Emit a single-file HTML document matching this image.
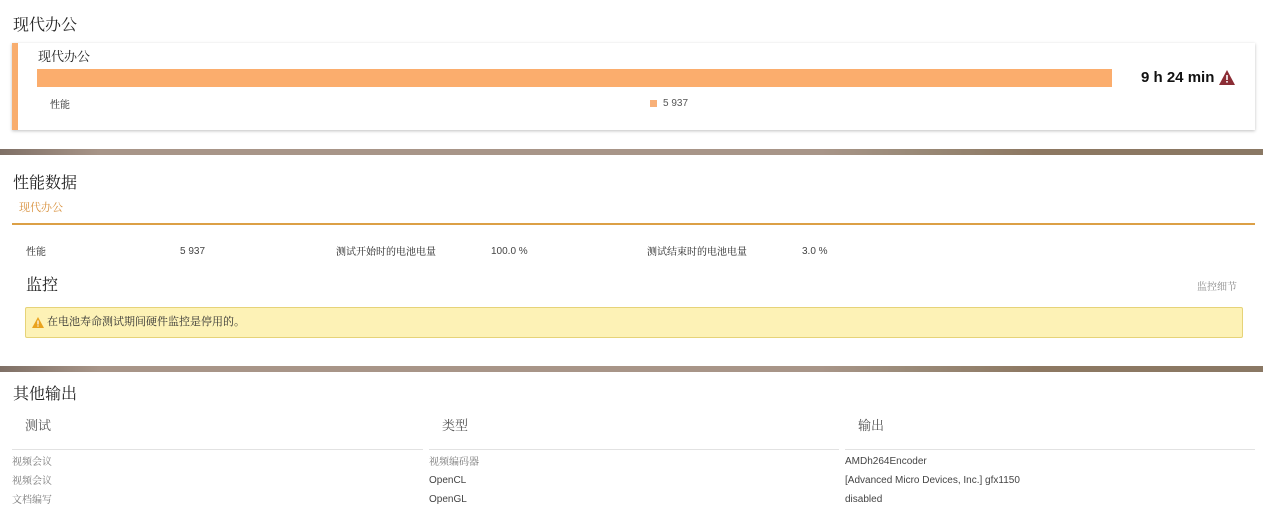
<!DOCTYPE html>
<html><head><meta charset="utf-8"><style>
*{margin:0;padding:0;box-sizing:border-box}
body{width:1263px;height:518px;background:#fff;position:relative;overflow:hidden;font-family:"Noto Serif CJK SC","Liberation Serif",serif;color:#222}
.a{position:absolute;white-space:nowrap;line-height:1}
.s{font-family:"Liberation Sans","Noto Sans CJK SC",sans-serif}
.h{font-size:16px;color:#222}
.div{position:absolute;left:0;width:1263px;height:6px;background:linear-gradient(90deg,#7f7066,#a89588 8%,#a89588 65%,#9a8a78 72%,#8d7862 82%,#8a7864 100%)}
.col{position:absolute;top:449px;height:1px;background:#e2e2e2}
.r{font-size:10px;color:#777}
</style></head><body>
<div class="a h" style="left:13px;top:16px">现代办公</div>
<div style="position:absolute;left:12px;top:43px;width:1243px;height:87px;background:#fff;border-left:6px solid #f8ad6e;box-shadow:0 1px 3px rgba(0,0,0,.25)"></div>
<div class="a" style="left:38px;top:49px;font-size:13px">现代办公</div>
<div style="position:absolute;left:37px;top:69px;width:1075px;height:18px;background:#fbad6d"></div>
<div class="a" style="left:50px;top:99px;font-size:10px">性能</div>
<div style="position:absolute;left:650px;top:100px;width:7px;height:7px;background:#f8b078"></div>
<div class="a s" style="left:663px;top:99px;font-size:10px;color:#555">5 937</div>
<div class="a s" style="left:1141px;top:70px;font-size:15px;font-weight:bold;color:#111">9 h 24 min</div>
<svg style="position:absolute;left:1219px;top:70px" width="16" height="15" viewBox="0 0 16 15"><path d="M8 0L16 15H0Z" fill="#8b2d35"/><rect x="7.2" y="5" width="1.6" height="5" fill="#fff"/><rect x="7.2" y="11" width="1.6" height="1.6" fill="#fff"/></svg>
<div class="div" style="top:149px"></div>
<div class="a h" style="left:13px;top:174px">性能数据</div>
<div class="a" style="left:19px;top:202px;font-size:11px;color:#d8903c">现代办公</div>
<div style="position:absolute;left:12px;top:223px;width:1243px;height:2px;background:#dca046"></div>
<div class="a" style="left:26px;top:246px;font-size:10px">性能</div>
<div class="a s" style="left:180px;top:247px;font-size:10px;color:#444">5 937</div>
<div class="a" style="left:336px;top:246px;font-size:10px">测试开始时的电池电量</div>
<div class="a s" style="left:491px;top:247px;font-size:10px;color:#444">100.0 %</div>
<div class="a" style="left:647px;top:246px;font-size:10px">测试结束时的电池电量</div>
<div class="a s" style="left:802px;top:247px;font-size:10px;color:#444">3.0 %</div>
<div class="a h" style="left:26px;top:276px">监控</div>
<div class="a" style="left:1197px;top:281px;font-size:10px;color:#888">监控细节</div>
<div style="position:absolute;left:25px;top:307px;width:1218px;height:31px;background:#fdf2b6;border:1px solid #e6d378;border-radius:2px"></div>
<svg style="position:absolute;left:32px;top:317px" width="12" height="11" viewBox="0 0 12 11"><path d="M6 0L12 11H0Z" fill="#e9a31e"/><rect x="5.4" y="3.5" width="1.2" height="4" fill="#fff"/><rect x="5.4" y="8.4" width="1.2" height="1.2" fill="#fff"/></svg>
<div class="a" style="left:47px;top:316px;font-size:11px;color:#333">在电池寿命测试期间硬件监控是停用的。</div>
<div class="div" style="top:366px"></div>
<div class="a h" style="left:13px;top:385px">其他输出</div>
<div class="a" style="left:25px;top:418px;font-size:13px;color:#555">测试</div>
<div class="a" style="left:442px;top:418px;font-size:13px;color:#555">类型</div>
<div class="a" style="left:858px;top:418px;font-size:13px;color:#555">输出</div>
<div class="col" style="left:12px;width:411px"></div>
<div class="col" style="left:429px;width:410px"></div>
<div class="col" style="left:845px;width:410px"></div>
<div class="a r" style="left:12px;top:456px">视频会议</div>
<div class="a r" style="left:12px;top:475px">视频会议</div>
<div class="a r" style="left:12px;top:494px">文档编写</div>
<div class="a r" style="left:429px;top:456px">视频编码器</div>
<div class="a r s" style="left:429px;top:476px;color:#444">OpenCL</div>
<div class="a r s" style="left:429px;top:495px;color:#444">OpenGL</div>
<div class="a r s" style="left:845px;top:457px;color:#444">AMDh264Encoder</div>
<div class="a r s" style="left:845px;top:476px;color:#444">[Advanced Micro Devices, Inc.] gfx1150</div>
<div class="a r s" style="left:845px;top:495px;color:#444">disabled</div>
</body></html>
